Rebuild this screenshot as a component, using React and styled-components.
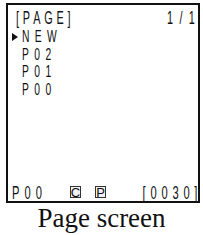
import React from 'react'
import styled, { createGlobalStyle } from 'styled-components'

const GlobalStyle = createGlobalStyle`
  html, body {
    margin: 0;
    padding: 0;
    background: #fff;
  }
`

const Page = styled.div`
  width: 203px;
  height: 235px;
  overflow: hidden;
  background: #fff;
`

const Screen = styled.section`
  box-sizing: border-box;
  width: 194px;
  height: 200px;
  margin: 3px 0 0 6px;
  border: 2px solid #111;
  display: flex;
  flex-direction: column;
  font-family: 'Liberation Sans', Arial, sans-serif;
  color: #111;
`

// condensed LCD lettering: the panel font is tall and narrow
const Lcd = styled.span`
  display: inline-block;
  white-space: nowrap;
  line-height: inherit;
  transform: scaleX(${p => p.$sx || 0.62});
  transform-origin: ${p => (p.$right ? 'right' : 'left')} center;
  letter-spacing: ${p => p.$ls}px;
  margin-right: ${p => (p.$right ? -p.$ls * (p.$sx || 0.62) : 0)}px;
`

const Header = styled.div`
  display: flex;
  justify-content: space-between;
  align-items: baseline;
  padding: 4px 3px 0 8px;
  font-size: 17.5px;
  line-height: 18px;
`

const List = styled.ul`
  list-style: none;
  margin: 0;
  padding: 1px 0 0;
  flex: 1;
`

const Row = styled.li`
  display: flex;
  align-items: center;
  height: 17.5px;
  font-size: 15.6px;
  line-height: 17px;
`

const Cursor = styled.span`
  width: 14px;
  flex: none;
  display: flex;
  justify-content: flex-end;
  padding-right: 4px;
  box-sizing: border-box;
  &::before {
    content: '';
    visibility: ${p => (p.$on ? 'visible' : 'hidden')};
    border-left: 6px solid #111;
    border-top: 4.5px solid transparent;
    border-bottom: 4.5px solid transparent;
  }
`

const Footer = styled.div`
  display: grid;
  grid-template-columns: 58px 25px 1fr auto;
  align-items: end;
  padding: 0 8px 0 4px;
  font-size: 18px;
  line-height: 16px;
`

const Mode = styled.span`
  box-sizing: border-box;
  display: inline-flex;
  align-items: center;
  justify-content: center;
  width: 11px;
  height: 12px;
  margin-bottom: 3px;
  border: 1px solid #333;
  background: #f2f2f2;
  font-size: 13px;
  line-height: 1;
`

const Caption = styled.div`
  text-align: center;
  font-family: 'Liberation Serif', 'Times New Roman', serif;
  font-size: 27px;
  line-height: 30px;
  color: #111;
`

const pages = ['P02', 'P01', 'P00']

export default function App() {
  return (
    <Page>
      <GlobalStyle />
      <Screen>
        <Header>
          <Lcd $ls={6.2}>[PAGE]</Lcd>
          <Lcd $ls={10.3} $right>1/1</Lcd>
        </Header>
        <List>
          <Row>
            <Cursor $on />
            <Lcd $ls={8.2} $sx={0.66}>NEW</Lcd>
          </Row>
          {pages.map(p => (
            <Row key={p}>
              <Cursor />
              <Lcd $ls={8.2} $sx={0.66}>{p}</Lcd>
            </Row>
          ))}
        </List>
        <Footer>
          <Lcd $ls={8.1}>P00</Lcd>
          <Mode>C</Mode>
          <Mode>P</Mode>
          <Lcd $ls={7.7} $right>[0030]</Lcd>
        </Footer>
      </Screen>
      <Caption>Page screen</Caption>
    </Page>
  )
}
